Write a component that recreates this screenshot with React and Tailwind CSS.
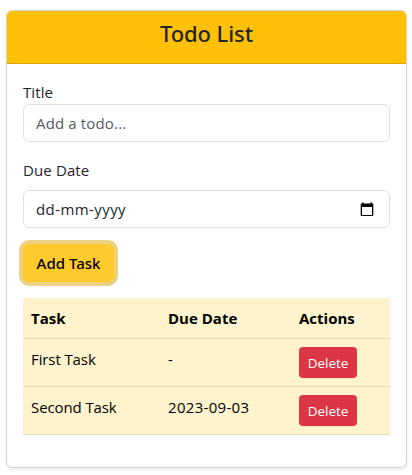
import React from "react";

const tasks = [
  { name: "First Task", due: "-" },
  { name: "Second Task", due: "2023-09-03" },
];

function CalendarIcon() {
  return (
    <svg width="14" height="15" viewBox="0 0 14 15" className="block shrink-0">
      <path d="M2.3 0.3h1.2v1.2h7V0.3h1.2v1.2h1.1c.3 0 .5.2.5.5v11.6c0 .3-.2.5-.5.5H1.2c-.3 0-.5-.2-.5-.5V2c0-.3.2-.5.5-.5h1.1zM2 5v8h10V5z" fill="#000" fillRule="evenodd" />
    </svg>
  );
}

export default function App() {
  return (
    <div className="h-[475px] w-[412px] overflow-hidden bg-white pt-2.5 pl-1.5 font-['Open_Sans','Noto_Sans',sans-serif] text-[15px] leading-6 text-[#212529]">
      <div className="h-[458px] w-[401px] overflow-hidden rounded-md border border-[#d2d3d4] bg-white shadow-[0_2px_4px_rgba(0,0,0,0.075)]">
        <div className="h-[53px] border-b border-[#d9a406] bg-[#ffc107] pt-2 text-center">
          <h4 className="font-['Noto_Sans','Open_Sans',sans-serif] text-[22px] leading-[28px] font-medium tracking-[-0.1px]">Todo List</h4>
        </div>
        <div className="p-4">
          <label className="block tracking-[0.1px]">Title</label>
          <div className="flex h-[38px] items-center rounded-md border border-[#dee2e6] px-3 tracking-[0.15px] text-[#595c5f]">
            Add a todo...
          </div>
          <label className="mt-4 mb-2 block tracking-[0.12px]">Due Date</label>
          <div className="flex h-[38px] items-center justify-between rounded-md border border-[#dee2e6] pr-[15px] pl-3">
            <span className="tracking-[0.42px]">dd-mm-yyyy</span>
            <CalendarIcon />
          </div>
          <button className="mt-4 block h-[38px] w-[91px] rounded-md bg-[#ffca2c] text-center font-['Noto_Sans','Open_Sans',sans-serif] font-medium whitespace-nowrap text-black shadow-[0_0_0_4px_#ecd182]">
            Add Task
          </button>
          <table className="mt-4 w-[367px] table-fixed border-separate border-spacing-0 bg-[#fff3cd] text-left text-black">
            <thead>
              <tr className="align-top">
                <th className="h-[41px] w-[137px] border-b border-[#e6dbb9] p-2 font-bold">Task</th>
                <th className="w-[131px] border-b border-[#e6dbb9] p-2 font-bold">Due Date</th>
                <th className="border-b border-[#e6dbb9] p-2 font-bold">Actions</th>
              </tr>
            </thead>
            <tbody>
              {tasks.map((task) => (
                <tr key={task.name} className="align-top">
                  <td className="h-12 border-b border-[#e6dbb9] p-2 tracking-[-0.1px]">{task.name}</td>
                  <td className="border-b border-[#e6dbb9] p-2 tracking-[0.3px]">{task.due}</td>
                  <td className="border-b border-[#e6dbb9] px-2 pt-2">
                    <button className="block h-[31px] w-[58px] rounded bg-[#dc3545] pt-px text-center text-[13.5px] leading-[21px] tracking-[-0.05px] text-white">Delete</button>
                  </td>
                </tr>
              ))}
            </tbody>
          </table>
        </div>
      </div>
    </div>
  );
}
